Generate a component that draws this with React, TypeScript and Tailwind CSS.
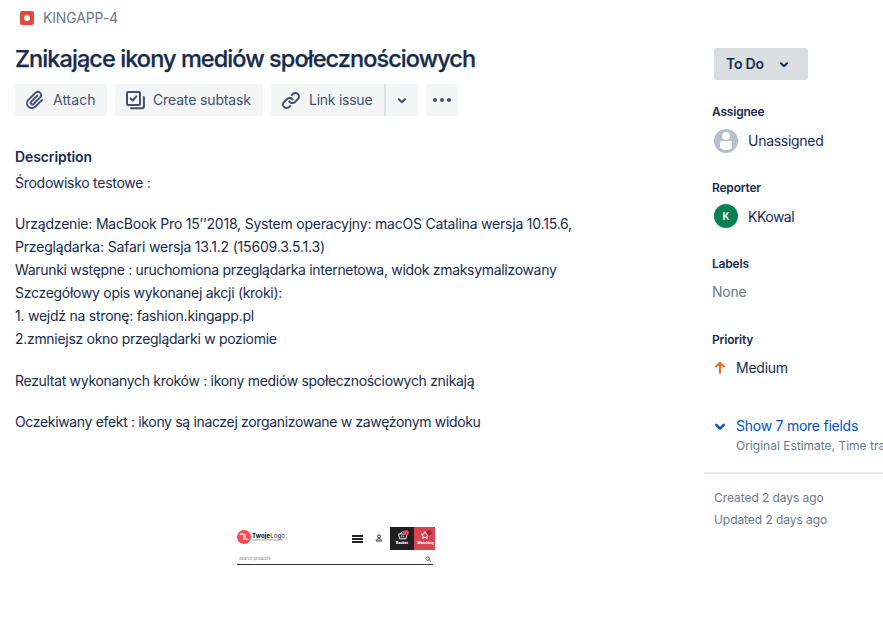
import React from "react";

function Chevron({ className }: { className?: string }) {
  return (
    <svg viewBox="0 0 10 6" className={className} fill="none" stroke="currentColor" strokeWidth="2" strokeLinecap="round" strokeLinejoin="round">
      <path d="M1.9 1.2 5 4.3 8.1 1.2" />
    </svg>
  );
}

function AttachIcon() {
  return (
    <svg viewBox="0 0 24 24" className="size-6" fill="currentColor">
      <path d="M11.643 17.965c-1.53 1.495-4.016 1.496-5.542.004a3.773 3.773 0 0 1 .002-5.412l7.147-6.985a2.316 2.316 0 0 1 3.233-.003c.893.873.895 2.282.004 3.153l-6.703 6.55a.653.653 0 0 1-.914-.008.62.62 0 0 1 0-.902l6.229-6.087a.941.941 0 0 0 0-1.353.995.995 0 0 0-1.384 0l-6.23 6.087a2.502 2.502 0 0 0 0 3.607 2.643 2.643 0 0 0 3.683.009l6.703-6.55a4.074 4.074 0 0 0-.003-5.859 4.306 4.306 0 0 0-6.002.003l-7.148 6.985a5.655 5.655 0 0 0-.001 8.118c2.29 2.237 6.015 2.238 8.308-.004l6.862-6.705a.941.941 0 0 0 0-1.353.995.995 0 0 0-1.384 0l-6.86 6.705z" />
    </svg>
  );
}

function SubtaskIcon() {
  return (
    <svg viewBox="0 0 24 24" className="size-6" fill="none" stroke="currentColor" strokeWidth="2" strokeLinecap="round" strokeLinejoin="round">
      <rect x="4" y="4" width="13" height="13" rx="1" />
      <path d="M7.6 10.4 9.8 12.5 13.4 8.4" />
      <path d="M8 20.2h11a2 2 0 0 0 1.9-2V9" />
    </svg>
  );
}

function LinkIcon() {
  return (
    <svg viewBox="0 0 24 24" className="size-6" fill="currentColor">
      <path d="M12.856 5.457l-.937.92a1.002 1.002 0 0 0 0 1.437 1.047 1.047 0 0 0 1.463 0l.984-.966c.967-.95 2.542-1.135 3.602-.288a2.54 2.54 0 0 1 .203 3.81l-2.903 2.852a2.646 2.646 0 0 1-3.696 0l-1.11-1.09L9 13.57l1.108 1.089c1.822 1.788 4.802 1.788 6.622 0l2.905-2.852a4.558 4.558 0 0 0-.357-6.82c-1.893-1.517-4.695-1.226-6.422.47" />
      <path d="M11.144 19.543l.937-.92a1.002 1.002 0 0 0 0-1.437 1.047 1.047 0 0 0-1.462 0l-.985.966c-.967.95-2.542 1.135-3.602.288a2.54 2.54 0 0 1-.203-3.81l2.903-2.852a2.646 2.646 0 0 1 3.696 0l1.11 1.09L15 11.43l-1.108-1.089c-1.822-1.788-4.802-1.788-6.622 0l-2.905 2.852a4.558 4.558 0 0 0 .357 6.82c1.893 1.517 4.695 1.226 6.422-.47" />
    </svg>
  );
}

function Toolbar() {
  return (
    <div className="mt-[10px] flex h-8 gap-2 text-sm text-[#42526e]">
      <button className="flex w-[92px] items-center rounded-[3px] bg-[#f4f5f7] pl-2">
        <AttachIcon />
        <span className="ml-1.5">Attach</span>
      </button>
      <button className="flex w-[148px] items-center rounded-[3px] bg-[#f4f5f7] pl-2">
        <SubtaskIcon />
        <span className="ml-1.5 whitespace-nowrap tracking-[-0.14px]">Create subtask</span>
      </button>
      <div className="flex w-[147px]">
        <button className="flex w-[113px] items-center rounded-l-[3px] bg-[#f4f5f7] pl-2">
          <LinkIcon />
          <span className="ml-1.5 whitespace-nowrap tracking-[-0.25px]">Link issue</span>
        </button>
        <button className="flex flex-1 items-center justify-center rounded-r-[3px] border-l-2 border-[#dcdfe5] bg-[#f4f5f7]">
          <Chevron className="mt-px h-[6px] w-[10px]" />
        </button>
      </div>
      <button className="flex w-8 items-center justify-center gap-[3px] rounded-[3px] bg-[#f4f5f7]">
        <i className="size-1 rounded-full bg-[#42526e]" />
        <i className="size-1 rounded-full bg-[#42526e]" />
        <i className="size-1 rounded-full bg-[#42526e]" />
      </button>
    </div>
  );
}

function ShopPreview() {
  return (
    <div className="ml-[222px] mt-[94px] h-[38px] w-[198px] font-['Inter',sans-serif]">
      <div className="flex h-[23px] items-start">
        <svg viewBox="0 0 14 14" className="mt-[3px] size-[14px]">
          <circle cx="7" cy="7" r="7" fill="#fb4653" />
          <path d="M2.6 4.2h4v6M8.4 3.8v5.6h3" fill="none" stroke="#fff" strokeWidth="1.3" />
        </svg>
        <div className="ml-px mt-[5px] w-[100px]">
          <div className="text-[6px] leading-[7px] tracking-[0.1px] text-[#222]">
            <b className="font-extrabold">Twoje</b>Logo
          </div>
          <div className="whitespace-nowrap text-[2.2px] leading-[3px] text-[#777]">Graphics and online solutions</div>
        </div>
        <div className="mt-[8px] flex w-[11px] flex-col gap-[1px]">
          <i className="h-[2px] bg-[#222]" />
          <i className="h-[2px] bg-[#222]" />
          <i className="h-[2px] bg-[#222]" />
        </div>
        <svg viewBox="0 0 8 8" className="ml-[12px] mt-[7px] size-[8px]" fill="none" stroke="#333" strokeWidth="1">
          <circle cx="4" cy="2.4" r="1.5" />
          <path d="M1.2 7c0-3 5.6-3 5.6 0z" />
        </svg>
        <div className="ml-[7px] flex h-[23px] w-6 flex-col items-center bg-[#1f1f1f]">
          <svg viewBox="0 0 12 12" className="ml-[1px] mt-[2px] h-[12px] w-[12px]" fill="none">
            <path d="M1.6 5h8.4l-1 4.8H2.6zM3.6 5l1.6-2.5M8 5 6.6 2.5M4.6 6.5v2M6.8 6.5v2" stroke="#fff" strokeWidth="0.9" />
            <circle cx="9.2" cy="3.5" r="2.6" fill="#e8404d" />
          </svg>
          <span className="text-[3.5px] font-extrabold leading-[5px] text-white">Basket</span>
        </div>
        <div className="flex h-[23px] w-[21px] flex-col items-center bg-[#d94452]">
          <svg viewBox="0 0 12 12" className="ml-[3px] mt-[2px] h-[12px] w-[12px]" fill="none">
            <path d="m5 2.7 1.1 2.2 2.5.3-1.8 1.7.4 2.5L5 8.2 2.8 9.4l.4-2.5-1.8-1.7 2.5-.3z" stroke="#fff" strokeWidth="0.9" />
            <circle cx="9.2" cy="3.5" r="2.6" fill="#a82c39" />
          </svg>
          <span className="ml-[2px] text-[3.5px] font-extrabold leading-[5px] text-white">Watching</span>
        </div>
      </div>
      <div className="flex h-[15px] w-[196px] items-center justify-between border-b border-[#333] pl-[2px] pt-[3px]">
        <span className="text-[4px] leading-[6px] tracking-[0.02px] text-[#777]">Search products</span>
        <svg viewBox="0 0 8 8" className="mr-px mt-px size-[7px]" fill="none" stroke="#333" strokeWidth="0.9">
          <circle cx="3.2" cy="3" r="2" />
          <path d="m4.8 4.6 2.4 2.3" />
        </svg>
      </div>
    </div>
  );
}

function Description() {
  return (
    <section className="mt-[31px] text-sm leading-[23px] text-[#172b4d]">
      <h2 className="h-5 font-semibold leading-5 tracking-[-0.1px]">Description</h2>
      <div className="mt-1 whitespace-nowrap">
        <p className="tracking-[-0.27px]">Środowisko testowe :</p>
        <p className="mt-[18px]">
          <span className="tracking-[-0.205px]">Urządzenie: MacBook Pro 15’’2018, System operacyjny: macOS Catalina wersja 10.15.6,</span>
          <br />
          <span className="tracking-[-0.18px]">Przeglądarka: Safari wersja 13.1.2 (15609.3.5.1.3)</span>
          <br />
          <span className="tracking-[-0.31px]">Warunki wstępne : uruchomiona przeglądarka internetowa, widok zmaksymalizowany</span>
          <br />
          <span className="tracking-[-0.29px]">Szczegółowy opis wykonanej akcji (kroki):</span>
          <br />
          <span className="tracking-[-0.24px]">1. wejdź na stronę: fashion.kingapp.pl</span>
          <br />
          <span className="tracking-[-0.3px]">2.zmniejsz okno przeglądarki w poziomie</span>
        </p>
        <p className="mt-[19px] tracking-[-0.31px]">Rezultat wykonanych kroków : ikony mediów społecznościowych znikają</p>
        <p className="mt-[18px] tracking-[-0.34px]">Oczekiwany efekt : ikony są inaczej zorganizowane w zawężonym widoku</p>
      </div>
    </section>
  );
}

function Field({ label, children }: { label: string; children: React.ReactNode }) {
  return (
    <div className="h-[76px] pl-2">
      <h3 className="text-xs font-semibold leading-4 tracking-[-0.2px]">{label}</h3>
      <div className="mt-[9px] flex h-6 items-center text-sm">{children}</div>
    </div>
  );
}

function Sidebar() {
  return (
    <aside className="w-[179px] overflow-hidden whitespace-nowrap pt-12 text-[#172b4d]">
      <button className="ml-[10px] flex h-8 w-[94px] items-center rounded-[3px] bg-[#dadde2] pl-3 text-sm font-semibold">
        <span className="tracking-[-0.2px]">To Do</span>
        <Chevron className="ml-[15px] mt-px h-[6px] w-[10px]" />
      </button>
      <div className="mt-6">
        <Field label="Assignee">
          <svg viewBox="0 0 24 24" className="ml-[2px] size-6">
            <circle cx="12" cy="12" r="12" fill="#b9bfca" />
            <circle cx="12" cy="7" r="4" fill="#fff" />
            <path d="M6 13.8c0-1 .8-1.8 1.8-1.8h8.4c1 0 1.8.8 1.8 1.8v3.4c0 5-12 5-12 0z" fill="#fff" />
          </svg>
          <span className="ml-[10px] tracking-[-0.28px]">Unassigned</span>
        </Field>
        <Field label="Reporter">
          <span className="mb-[2px] ml-[2px] flex size-6 items-center justify-center rounded-full bg-[#0b8055] text-[10px] font-semibold text-white">K</span>
          <span className="ml-[10px] tracking-[-0.5px]">KKowal</span>
        </Field>
        <Field label="Labels">
          <span className="mb-[2px] text-[#6b778c] tracking-[-0.2px]">None</span>
        </Field>
        <Field label="Priority">
          <svg viewBox="0 0 16 16" className="mb-[2px] size-4" fill="none" stroke="#ee6c20" strokeWidth="2" strokeLinecap="round" strokeLinejoin="round">
            <path d="M8 13V3M4 6.6 8 2.8l4 3.8" />
          </svg>
          <span className="mb-[2px] ml-2 tracking-[-0.25px]">Medium</span>
        </Field>
      </div>
      <div className="mt-[8px] flex h-[56px] pl-[10px]">
        <Chevron className="mt-[7px] h-[8px] w-[12px] shrink-0 text-[#0052cc]" />
        <div className="ml-[10px]">
          <div className="text-sm leading-5 tracking-[-0.25px] text-[#0052cc]">Show 7 more fields</div>
          <div className="text-xs leading-5 text-[#6b778c]">Original Estimate, Time tracking</div>
        </div>
      </div>
      <div className="border-t-2 border-[#e6e8ec] pl-[10px] pt-[13px] text-xs leading-[22px] tracking-[-0.06px] text-[#6b778c]">
        <div>Created 2 days ago</div>
        <div>Updated 2 days ago</div>
      </div>
    </aside>
  );
}

export default function App() {
  return (
    <div className="flex h-[617px] w-[883px] overflow-hidden bg-white font-['Inter',sans-serif]">
      <main className="w-[704px] pl-[15px] pt-2">
        <div className="flex h-5 items-center pl-[5px] text-sm text-[#6b778c]">
          <span className="flex size-[14px] items-center justify-center rounded-[2px] bg-[#e5493a]">
            <i className="size-[6px] rounded-full bg-white" />
          </span>
          <span className="ml-[9px] tracking-[-0.15px]">KINGAPP-4</span>
        </div>
        <h1 className="mt-4 whitespace-nowrap text-[23.5px] font-medium leading-[30px] tracking-[-0.93px] text-[#172b4d] [-webkit-text-stroke:0.25px_#172b4d]">
          Znikające ikony mediów społecznościowych
        </h1>
        <Toolbar />
        <Description />
        <ShopPreview />
      </main>
      <Sidebar />
    </div>
  );
}
